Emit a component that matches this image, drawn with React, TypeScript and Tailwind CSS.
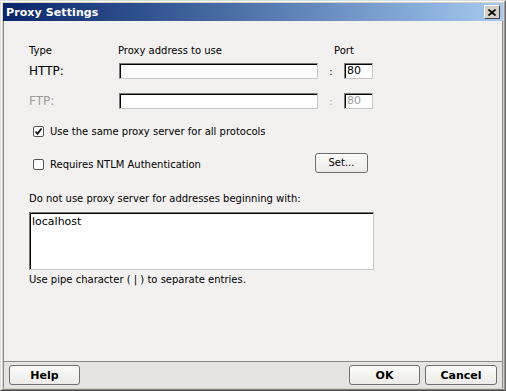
import React from 'react';

const font = { fontFamily: '"DejaVu Sans", "Liberation Sans", sans-serif' };

const Field = ({ className = '', value = '', disabled = false }: { className?: string; value?: string; disabled?: boolean }) => (
  <div
    className={`h-[16px] bg-white border border-t-[#7a7a7a] border-l-[#7a7a7a] border-b-[#c8c8c8] border-r-[#c8c8c8] shadow-[inset_1px_1px_0_#000] pl-[2px] text-[11px] leading-[14px] ${disabled ? 'text-[#9a9a9a]' : 'text-black'} ${className}`}
  >
    {value}
  </div>
);

const CheckBox = ({ checked, label }: { checked?: boolean; label: string }) => (
  <label className="flex items-center gap-[6px]">
    <span className="w-[11px] h-[11px] rounded-[2px] border border-[#555] bg-white flex items-center justify-center">
      {checked && (
        <svg width="9" height="9" viewBox="0 0 9 9">
          <path d="M1.5 4.5 L3.5 6.8 L7.5 1.5" stroke="#111" strokeWidth="1.8" fill="none" />
        </svg>
      )}
    </span>
    <span className="text-[10px] text-black">{label}</span>
  </label>
);

const DlgButton = ({ children, className = '' }: { children: React.ReactNode; className?: string }) => (
  <button
    className={`h-[20px] rounded-[3px] border border-[#6e6e6e] bg-gradient-to-b from-[#fbfbfa] to-[#ecebe8] text-[11px] font-bold text-black leading-none ${className}`}
  >
    {children}
  </button>
);

export default function App() {
  return (
    <div className="w-[506px] h-[391px] bg-[#d4d0c8] border border-t-[#dcdcdc] border-l-[#dcdcdc] border-r-[#6a6a6a] border-b-[#4a4a4a]" style={font}>
      <div className="w-full h-full border border-t-white border-l-white border-r-[#9a9a9a] border-b-[#808080] p-[1px] flex flex-col">
        {/* title bar */}
        <div className="h-[18px] shrink-0 flex items-center justify-between pl-[3px] pr-[3px] bg-gradient-to-r from-[#0a246a] to-[#a6caf0]">
          <span className="text-white font-bold text-[11px] leading-none tracking-[0.1px]">Proxy Settings</span>
          <div className="w-[16px] h-[14px] bg-[#d4d0c8] border border-t-white border-l-white border-r-[#404040] border-b-[#404040] flex items-center justify-center">
            <svg width="8" height="7" viewBox="0 0 8 7">
              <path d="M0.5 0.5 L7.5 6.5 M7.5 0.5 L0.5 6.5" stroke="#000" strokeWidth="1.6" />
            </svg>
          </div>
        </div>

        {/* body */}
        <div className="flex-1 bg-[#f2f1ef] border-l border-r border-[#8a8a8a] pl-[25px] pt-[22px] text-[10px] text-black">
          <div className="flex h-[14px] items-center">
            <span className="w-[89px]">Type</span>
            <span className="w-[216px]">Proxy address to use</span>
            <span>Port</span>
          </div>

          <div className="flex items-center h-[16px] mt-[6px]">
            <span className="w-[90px] text-[12px]">HTTP:</span>
            <Field className="w-[199px]" />
            <span className="w-[26px] text-center">:</span>
            <Field className="w-[29px]" value="80" />
          </div>

          <div className="flex items-center h-[16px] mt-[14px] text-[#9a9a9a]">
            <span className="w-[90px] text-[12px]">FTP:</span>
            <Field className="w-[199px]" disabled />
            <span className="w-[26px] text-center">:</span>
            <Field className="w-[29px]" value="80" disabled />
          </div>

          <div className="ml-[4px] mt-[15px] h-[14px] flex items-center">
            <CheckBox checked label="Use the same proxy server for all protocols" />
          </div>

          <div className="flex items-center h-[20px] mt-[15px] ml-[4px]">
            <div className="w-[282px] pt-[3px]">
              <CheckBox label="Requires NTLM Authentication" />
            </div>
            <DlgButton className="w-[53px] !font-normal !text-[10px]">Set...</DlgButton>
          </div>

          <div className="mt-[19px] h-[14px] leading-[14px]">Do not use proxy server for addresses beginning with:</div>

          <div className="mt-[6px] w-[345px] h-[58px] bg-white border border-t-[#7a7a7a] border-l-[#7a7a7a] border-b-[#c8c8c8] border-r-[#c8c8c8] shadow-[inset_1px_1px_0_#000] pl-[2px] pt-[2px] text-[11px] leading-[14px]">
            localhost
          </div>

          <div className="mt-[3px] h-[14px] leading-[14px]">Use pipe character ( | ) to separate entries.</div>
        </div>

        {/* bottom buttons */}
        <div className="h-[27px] shrink-0 bg-[#e5e4e0] border-t border-[#8a8a8a] border-l border-r flex items-center px-[5px]">
          <DlgButton className="w-[71px]">Help</DlgButton>
          <div className="flex-1" />
          <DlgButton className="w-[71px]">OK</DlgButton>
          <DlgButton className="w-[72px] ml-[5px]">Cancel</DlgButton>
        </div>
      </div>
    </div>
  );
}
